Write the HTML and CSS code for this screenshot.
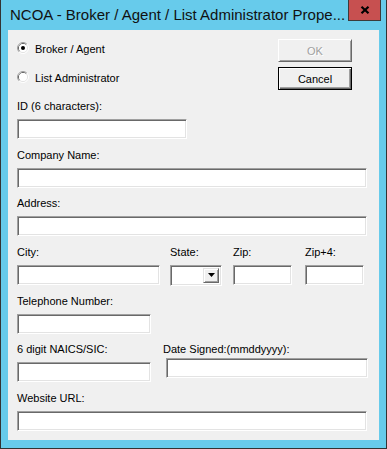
FILE: index.html
```html
<!DOCTYPE html>
<html lang="en">
  <head>
    <meta charset="UTF-8" />
    <title>NCOA - Broker / Agent / List Administrator Properties</title>
    <link rel="stylesheet" href="styles.css">
  </head>
  <body>
    <div class="window">
      <div class="titlebar">
        <span class="title">NCOA - Broker / Agent / List Administrator Prope...</span>
        <button class="close" aria-label="Close">
          <svg width="10" height="8" viewBox="0 0 10 8">
            <path d="M1.5 0.8 L8.5 7.2 M8.5 0.8 L1.5 7.2" stroke="#000" stroke-width="2.2" fill="none" />
          </svg>
        </button>
      </div>

      <div class="client">
        <div class="top-row">
          <div class="radios">
            <label class="radio">
              <svg width="12" height="12" viewBox="0 0 12 12">
                <path d="M2.11 9.89 A5.5 5.5 0 0 1 9.89 2.11" stroke="#a0a0a0" fill="none" />
                <path d="M9.89 2.11 A5.5 5.5 0 0 1 2.11 9.89" stroke="#fff" fill="none" />
                <path d="M2.82 9.18 A4.5 4.5 0 0 1 9.18 2.82" stroke="#696969" fill="none" />
                <path d="M9.18 2.82 A4.5 4.5 0 0 1 2.82 9.18" stroke="#e3e3e3" fill="none" />
                <circle cx="6" cy="6" r="4" fill="#fff" />
                <circle cx="6" cy="6" r="2" fill="#000" />
              </svg>
              <span>Broker / Agent</span>
            </label>
            <label class="radio">
              <svg width="12" height="12" viewBox="0 0 12 12">
                <path d="M2.11 9.89 A5.5 5.5 0 0 1 9.89 2.11" stroke="#a0a0a0" fill="none" />
                <path d="M9.89 2.11 A5.5 5.5 0 0 1 2.11 9.89" stroke="#fff" fill="none" />
                <path d="M2.82 9.18 A4.5 4.5 0 0 1 9.18 2.82" stroke="#696969" fill="none" />
                <path d="M9.18 2.82 A4.5 4.5 0 0 1 2.82 9.18" stroke="#e3e3e3" fill="none" />
                <circle cx="6" cy="6" r="4" fill="#fff" />
              </svg>
              <span>List Administrator</span>
            </label>
          </div>
          <div class="buttons">
            <button class="btn" disabled>OK</button>
            <button class="btn btn-default">Cancel</button>
          </div>
        </div>

        <div class="fields">
          <div class="field">
            <div class="lbl">ID (6 characters):</div>
            <input type="text" class="edit w-id" />
          </div>
          <div class="field">
            <div class="lbl">Company Name:</div>
            <input type="text" class="edit w-full" />
          </div>
          <div class="field">
            <div class="lbl">Address:</div>
            <input type="text" class="edit w-full" />
          </div>
          <div class="field-row">
            <div class="field">
              <div class="lbl">City:</div>
              <input type="text" class="edit w-city" />
            </div>
            <div class="field col-state">
              <div class="lbl">State:</div>
              <div class="combo">
                <span class="combo-text"></span>
                <span class="combo-btn">
                  <svg width="7" height="4" viewBox="0 0 7 4"><polygon points="0,0 7,0 3.5,4" fill="#000" /></svg>
                </span>
              </div>
            </div>
            <div class="field col-zip">
              <div class="lbl">Zip:</div>
              <input type="text" class="edit w-zip" />
            </div>
            <div class="field col-zip4">
              <div class="lbl">Zip+4:</div>
              <input type="text" class="edit w-zip" />
            </div>
          </div>
          <div class="field">
            <div class="lbl">Telephone Number:</div>
            <input type="text" class="edit w-phone" />
          </div>
          <div class="field-row">
            <div class="field">
              <div class="lbl">6 digit NAICS/SIC:</div>
              <input type="text" class="edit w-phone" />
            </div>
            <div class="field col-date">
              <div class="lbl">Date Signed:(mmddyyyy):</div>
              <input type="text" class="edit w-date" />
            </div>
          </div>
          <div class="field">
            <div class="lbl">Website URL:</div>
            <input type="text" class="edit w-full" />
          </div>
        </div>
      </div>
    </div>
  </body>
</html>
```
FILE: styles.css
```css
body {
  margin: 0;
  background-color: #fff;
  font-family: "Liberation Sans", Arial, sans-serif;
  font-size: 11px;
  color: #000;
}
.window {
  width: 387px;
  height: 449px;
  box-sizing: border-box;
  background-color: #67cbeb;
  border: 1px solid #333;
  border-top: none;
  display: flex;
  flex-direction: column;
}
.titlebar {
  height: 30px;
  display: flex;
  align-items: flex-start;
  justify-content: space-between;
}
.title {
  font-size: 15px;
  line-height: 30px;
  padding-left: 9px;
  color: #111;
  white-space: nowrap;
}
.close {
  width: 33px;
  height: 21px;
  margin-right: 5px;
  padding: 0;
  background-color: #c75050;
  border: 1px solid #3b3b3b;
  border-top: none;
  display: flex;
  align-items: center;
  justify-content: center;
}
.client {
  flex: 1;
  margin: 0 7px 8px 7px;
  background-color: #f0f0f0;
  padding: 9px 0 0 9px;
}
.top-row {
  display: flex;
  align-items: flex-start;
}
.radios {
  display: flex;
  flex-direction: column;
  gap: 16px;
  padding-top: 4px;
}
.radio {
  display: flex;
  align-items: flex-start;
  gap: 6px;
  line-height: 13px;
}
.radio svg {
  margin-top: -1px;
}
.buttons {
  margin-left: auto;
  margin-right: 27px;
  display: flex;
  flex-direction: column;
  gap: 5px;
}
.btn {
  width: 74px;
  height: 23px;
  padding: 0;
  font-family: "Liberation Sans", Arial, sans-serif;
  font-size: 11px;
  color: #000;
  background-color: #f0f0f0;
  border: 1px solid;
  border-color: #fff #696969 #696969 #fff;
  box-shadow: inset 1px 1px #f0f0f0, inset -1px -1px #a0a0a0;
}
.btn:disabled {
  color: #a0a0a0;
  text-shadow: 1px 1px 0 #fff;
}
.btn-default {
  border-color: #000;
  box-shadow: inset 1px 1px #fff, inset -1px -1px #696969, inset -2px -2px #a0a0a0;
}
.fields {
  margin-top: 10px;
  display: flex;
  flex-direction: column;
  gap: 9.67px;
}
.field {
  display: flex;
  flex-direction: column;
  align-items: flex-start;
}
.field-row {
  display: flex;
  align-items: flex-start;
  height: 39px;
}
.lbl {
  line-height: 13px;
  height: 13px;
  margin-bottom: 6px;
  white-space: nowrap;
}
.edit {
  height: 20px;
  box-sizing: border-box;
  margin: 0;
  padding: 0 2px;
  background-color: #fff;
  border: 1px solid;
  border-color: #a0a0a0 #fff #fff #a0a0a0;
  box-shadow: inset 1px 1px #696969, inset -1px -1px #e3e3e3;
  font-family: "Liberation Sans", Arial, sans-serif;
  font-size: 11px;
  outline: none;
}
.w-id {
  width: 170px;
}
.w-full {
  width: 350px;
}
.w-city {
  width: 143px;
}
.w-zip {
  width: 59px;
}
.w-phone {
  width: 134px;
}
.w-date {
  width: 202px;
  margin-left: 3px;
}
.col-state {
  margin-left: 10px;
}
.col-zip {
  margin-left: 11px;
}
.col-zip4 {
  margin-left: 13px;
}
.col-date {
  margin-left: 12px;
}
.col-date .lbl {
  margin-bottom: 2px;
}
.combo {
  width: 52px;
  height: 21px;
  box-sizing: border-box;
  background-color: #fff;
  border: 1px solid;
  border-color: #a0a0a0 #fff #fff #a0a0a0;
  box-shadow: inset 1px 1px #696969, inset -1px -1px #e3e3e3;
  display: flex;
  justify-content: flex-end;
  padding: 2px 2px 2px 2px;
}
.combo-btn {
  width: 16px;
  height: 15px;
  box-sizing: border-box;
  background-color: #f0f0f0;
  border: 1px solid;
  border-color: #e3e3e3 #696969 #696969 #e3e3e3;
  box-shadow: inset 1px 1px #fff, inset -1px -1px #a0a0a0;
  display: flex;
  align-items: center;
  justify-content: center;
}
```
